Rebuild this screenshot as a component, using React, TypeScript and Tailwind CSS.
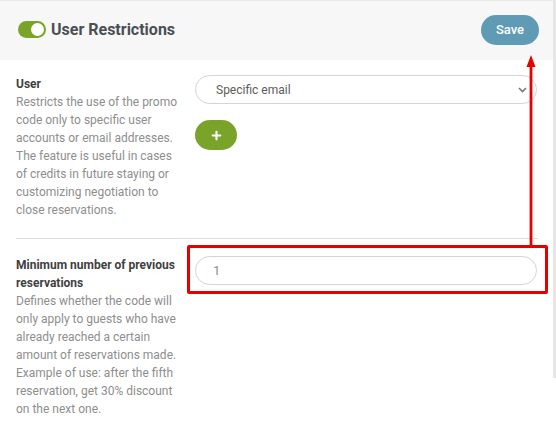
import { Plus } from 'lucide-react';

function Toggle() {
  return (
    <span className="relative inline-flex h-[17px] w-[28px] shrink-0 items-center rounded-full bg-[#7aa32a]">
      <span className="absolute right-[2px] top-[2px] h-[13px] w-[13px] rounded-full bg-white" />
    </span>
  );
}

function Field({ label, children, control }: { label: string; children: string; control: React.ReactNode }) {
  return (
    <div className="grid grid-cols-[168px_1fr] gap-[11px]">
      <div className="text-[12px] leading-[18px]">
        <div className="font-bold text-[#3f3f3f]">{label}</div>
        <p className="text-[#8e8e8e]">{children}</p>
      </div>
      <div>{control}</div>
    </div>
  );
}

export default function App() {
  return (
    <div
      className="relative flex h-[432px] w-[556px] overflow-hidden bg-white"
      style={{ fontFamily: 'Roboto, "Noto Sans", sans-serif' }}
    >
      <div className="w-[553px]">
        <header className="flex h-[60px] items-center justify-between border-t border-[#e9e9e9] bg-[#f7f7f7] pb-[2px] pl-[18px] pr-[14px]">
          <div className="flex items-center gap-[5px]">
            <Toggle />
            <h2 className="text-[16px] font-bold leading-none text-[#494f55]">User Restrictions</h2>
          </div>
          <button
            type="button"
            className="h-[30px] w-[58px] rounded-full bg-[#5f9bb4] text-[13px] font-medium text-white"
          >
            Save
          </button>
        </header>

        <div className="px-4">
          <section className="pb-[19px] pt-[15px]">
            <Field
              label="User"
              control={
                <div>
                  <div className="flex h-[29px] items-center justify-between rounded-full border border-[#d4d4d4] pl-[20px] pr-[9px] text-[12px] text-[#5c5c5c]">
                    <span>Specific email</span>
                    <svg width="9" height="6" viewBox="0 0 9 6" fill="none">
                      <polyline points="1,1 4.5,4.5 8,1" stroke="#777" strokeWidth="1.6" />
                    </svg>
                  </div>
                  <button
                    type="button"
                    className="mt-4 flex h-[30px] w-[42px] items-center justify-center rounded-full bg-[#7aa32a] text-white"
                  >
                    <Plus size={13} strokeWidth={4} />
                  </button>
                </div>
              }
            >
              Restricts the use of the promo code only to specific user accounts or email addresses. The feature is
              useful in cases of credits in future staying or customizing negotiation to close reservations.
            </Field>
          </section>

          <div className="mr-[-1px] border-t border-[#dedede]" />

          <section className="pt-[17px]">
            <Field
              label="Minimum number of previous reservations"
              control={
                <div className="flex h-[29px] items-center rounded-full border border-[#d4d4d4] pl-[17px] text-[13px] text-[#8a8a8a]">
                  1
                </div>
              }
            >
              Defines whether the code will only apply to guests who have already reached a certain amount of
              reservations made. Example of use: after the fifth reservation, get 30% discount on the next one.
            </Field>
          </section>
        </div>
      </div>
      <div className="h-[378px] w-[3px] bg-[#e6e6e6]" />

      {/* annotation */}
      <div className="absolute left-[187px] top-[245px] h-[49px] w-[361px] rounded-[2px] border-[3px] border-[#e60000]" />
      <svg className="absolute left-[524px] top-[54px]" width="14" height="192" viewBox="0 0 14 192">
        <polygon points="7,1 2.5,13 11.5,13" fill="#e60000" />
        <rect x="5.6" y="12" width="2.8" height="180" fill="#e60000" />
      </svg>
    </div>
  );
}
